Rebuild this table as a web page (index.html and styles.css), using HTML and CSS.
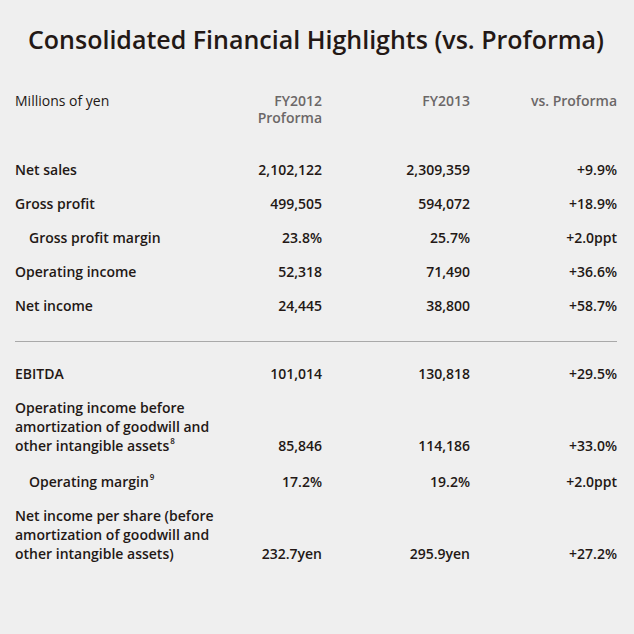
FILE: index.html
```html
<!DOCTYPE html>
<html lang="en">
<head>
<meta charset="utf-8">
<title>Consolidated Financial Highlights</title>
<link rel="stylesheet" href="styles.css">
</head>
<body>
<main class="page">
  <h1 class="title">Consolidated Financial Highlights (vs. Proforma)</h1>
  <div class="grid head">
    <div class="label unit">Millions of yen</div>
    <div class="num">FY2012<br>Proforma</div>
    <div class="num">FY2013</div>
    <div class="num">vs. Proforma</div>
  </div>
  <div class="grid body">
    <div class="label">Net sales</div><div class="num">2,102,122</div><div class="num">2,309,359</div><div class="num">+9.9%</div>
    <div class="label">Gross profit</div><div class="num">499,505</div><div class="num">594,072</div><div class="num">+18.9%</div>
    <div class="label sub">Gross profit margin</div><div class="num">23.8%</div><div class="num">25.7%</div><div class="num">+2.0ppt</div>
    <div class="label">Operating income</div><div class="num">52,318</div><div class="num">71,490</div><div class="num">+36.6%</div>
    <div class="label">Net income</div><div class="num">24,445</div><div class="num">38,800</div><div class="num">+58.7%</div>
  </div>
  <hr class="rule">
  <div class="grid body">
    <div class="label">EBITDA</div><div class="num">101,014</div><div class="num">130,818</div><div class="num">+29.5%</div>
    <div class="label">Operating income before amortization of goodwill and other intangible assets<sup>8</sup></div><div class="num">85,846</div><div class="num">114,186</div><div class="num">+33.0%</div>
    <div class="label sub">Operating margin<sup>9</sup></div><div class="num">17.2%</div><div class="num">19.2%</div><div class="num">+2.0ppt</div>
    <div class="label">Net income per share (before amortization of goodwill and other intangible assets)</div><div class="num">232.7yen</div><div class="num">295.9yen</div><div class="num">+27.2%</div>
  </div>
</main>
</body>
</html>
```

FILE: styles.css
```css
html, body {
  margin: 0;
  padding: 0;
  background: #efefef;
}
.page {
  width: 634px;
  height: 634px;
  box-sizing: border-box;
  padding: 23px 17px 0 15px;
  font-family: "Open Sans", "Noto Sans", sans-serif;
  color: #231815;
}
.title {
  margin: 0;
  text-align: center;
  font-size: 25px;
  font-weight: 600;
  line-height: 32px;
  letter-spacing: 0;
}
.grid {
  display: grid;
  grid-template-columns: 200px 107px 148px 147px;
  font-size: 14px;
  line-height: 19px;
  font-weight: 600;
}
.head {
  margin-top: 37px;
  align-items: start;
  color: #6b6767;
  line-height: 17px;
}
.head .unit {
  color: #231815;
  font-weight: 400;
}
.body {
  row-gap: 15px;
  align-items: end;
}
.head + .body {
  margin-top: 34px;
}
.num {
  text-align: right;
  white-space: nowrap;
}
.sub {
  padding-left: 14px;
}
.label sup {
  font-size: 8px;
  line-height: 1;
  vertical-align: top;
  position: relative;
  top: 1px;
  margin-left: 1px;
}
.rule {
  border: 0;
  border-top: 1px solid #a9a9a9;
  margin: 26px 0 22px;
  height: 0;
}
.rule + .body .sub {
  margin-top: 2px;
}
```
